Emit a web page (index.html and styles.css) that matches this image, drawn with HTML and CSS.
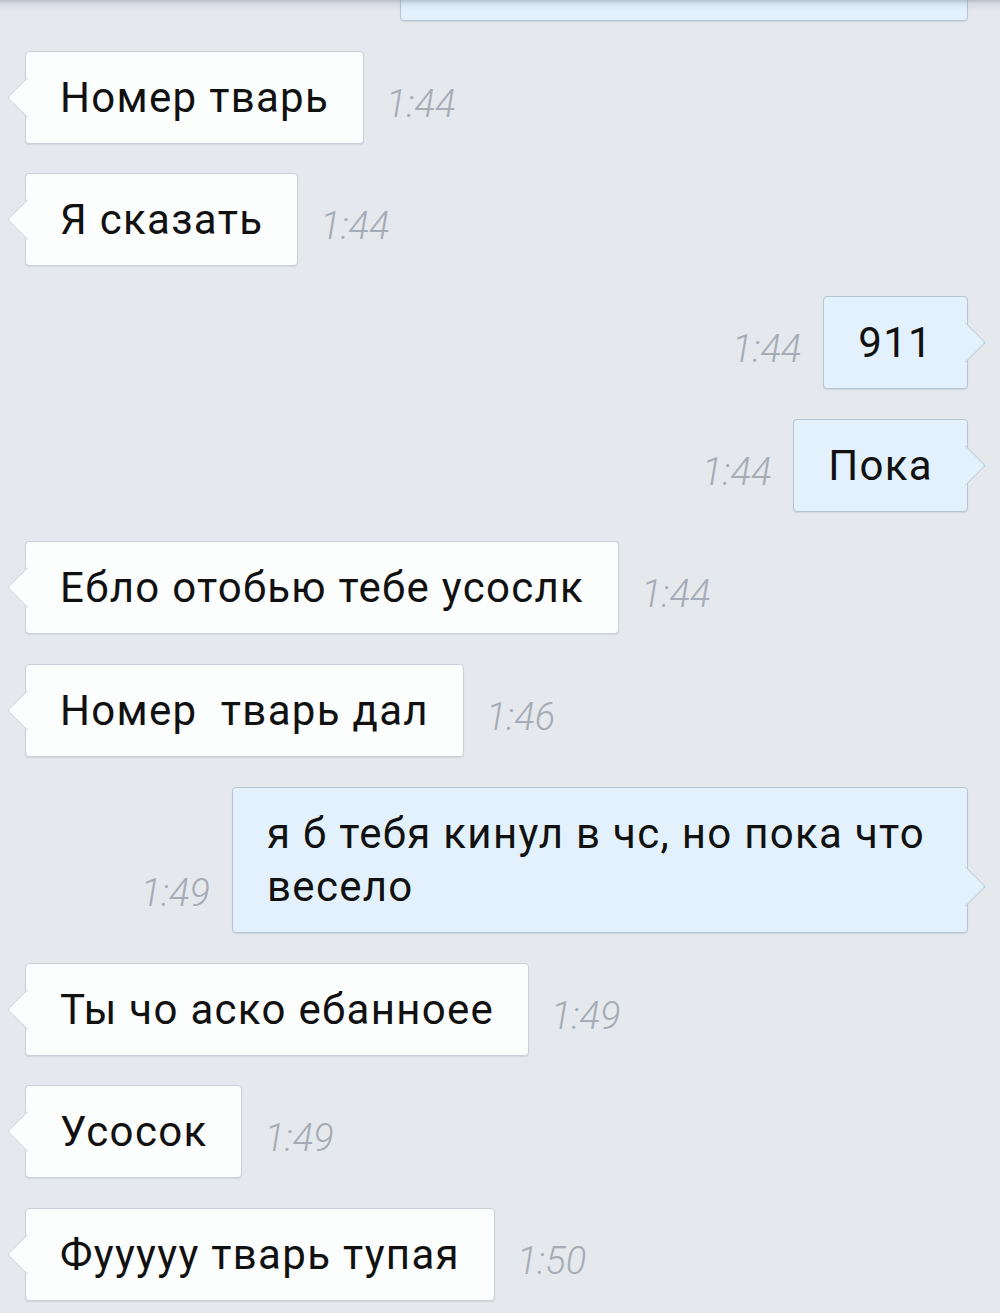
FILE: index.html
```html
<html>
    <head>
        <title>Чат</title>
        <link rel="stylesheet" href="styles.css">
    </head>
    <body>
        <div class="chat">
            <div class="shade"></div>

            <div class="msg out cut">
                <div class="bubble">у</div>
            </div>

            <div class="msg in">
                <div class="bubble">Номер тварь</div>
                <span class="time">1:44</span>
            </div>

            <div class="msg in">
                <div class="bubble">Я сказать</div>
                <span class="time">1:44</span>
            </div>

            <div class="msg out">
                <span class="time">1:44</span>
                <div class="bubble">911</div>
            </div>

            <div class="msg out">
                <span class="time">1:44</span>
                <div class="bubble">Пока</div>
            </div>

            <div class="msg in">
                <div class="bubble">Ебло отобью тебе усослк</div>
                <span class="time">1:44</span>
            </div>

            <div class="msg in">
                <div class="bubble">Номер&nbsp; тварь дал</div>
                <span class="time">1:46</span>
            </div>

            <div class="msg out">
                <span class="time">1:49</span>
                <div class="bubble">я б тебя кинул в чс, но пока что весело</div>
            </div>

            <div class="msg in">
                <div class="bubble">Ты чо аско ебанноее</div>
                <span class="time">1:49</span>
            </div>

            <div class="msg in">
                <div class="bubble">Усосок</div>
                <span class="time">1:49</span>
            </div>

            <div class="msg in">
                <div class="bubble">Фууууу тварь тупая</div>
                <span class="time">1:50</span>
            </div>
        </div>
    </body>
</html>
```

FILE: styles.css
```css
body {
    margin: 0;
    background-color: #e5e9ee;
    font-family: Roboto, "Noto Sans", sans-serif;
    overflow: hidden;
}

.chat {
    position: relative;
    width: 1000px;
    height: 1313px;
    overflow: hidden;
    display: flex;
    flex-direction: column;
    gap: 29.7px;
}

.shade {
    position: absolute;
    top: 0;
    left: 0;
    right: 0;
    height: 12px;
    z-index: 2;
    background: linear-gradient(rgba(120, 135, 150, 0.45), rgba(120, 135, 150, 0.12) 4px, rgba(120, 135, 150, 0));
}

.msg {
    display: flex;
    align-items: flex-end;
    gap: 22px;
}

.msg.in {
    padding-left: 25px;
}

.msg.out {
    justify-content: flex-end;
    padding-right: 32px;
}

.msg.cut {
    margin-top: -72px;
}

.msg.cut .bubble {
    width: 568px;
    padding-left: 90px;
    color: #777;
}

.bubble {
    position: relative;
    box-sizing: border-box;
    max-width: 736px;
    padding: 19px 34px;
    font-size: 42px;
    line-height: 53px;
    letter-spacing: 1.3px;
    color: #111;
    border-radius: 4px;
    box-shadow: 0 1px 1px rgba(60, 80, 100, 0.12);
}

.in .bubble {
    background-color: #fcfdfd;
    border: 1px solid #c9d1d8;
}

.out .bubble {
    background-color: #e2f1fb;
    border: 1px solid #b3c6d3;
}

.bubble::before {
    content: "";
    position: absolute;
    bottom: 31px;
    width: 28px;
    height: 28px;
    transform: rotate(45deg);
}

.in .bubble::before {
    left: -13px;
    background-color: #fcfdfd;
    border-left: 1px solid #c9d1d8;
    border-bottom: 1px solid #c9d1d8;
    border-bottom-left-radius: 3px;
}

.out .bubble::before {
    right: -13px;
    background-color: #e2f1fb;
    border-top: 1px solid #b3c6d3;
    border-right: 1px solid #b3c6d3;
    border-top-right-radius: 3px;
}

.time {
    font-size: 38px;
    line-height: 38px;
    font-weight: 300;
    font-style: italic;
    color: #a5acb5;
    margin-bottom: 21px;
}
```
